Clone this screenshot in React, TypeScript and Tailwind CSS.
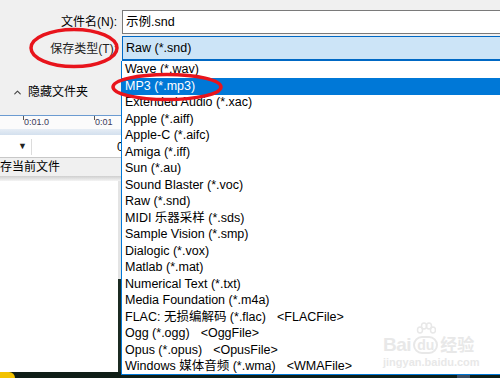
import { ChevronUp } from 'lucide-react';

const types = [
  { name: 'Wave (*.wav)' },
  { name: 'MP3 (*.mp3)', active: true },
  { name: 'Extended Audio (*.xac)' },
  { name: 'Apple (*.aiff)' },
  { name: 'Apple-C (*.aifc)' },
  { name: 'Amiga (*.iff)' },
  { name: 'Sun (*.au)' },
  { name: 'Sound Blaster (*.voc)' },
  { name: 'Raw (*.snd)' },
  { name: 'MIDI 乐器采样 (*.sds)' },
  { name: 'Sample Vision (*.smp)' },
  { name: 'Dialogic (*.vox)' },
  { name: 'Matlab (*.mat)' },
  { name: 'Numerical Text (*.txt)' },
  { name: 'Media Foundation (*.m4a)' },
  { name: 'FLAC: 无损编解码 (*.flac)', tag: '<FLACFile>' },
  { name: 'Ogg (*.ogg)', tag: '<OggFile>' },
  { name: 'Opus (*.opus)', tag: '<OpusFile>' },
  { name: 'Windows 媒体音频 (*.wma)', tag: '<WMAFile>' },
];

function Watermark() {
  return (
    <div className="absolute left-[383px] top-[322px] flex flex-col text-[#e8e8e8] pointer-events-none">
      <div className="flex items-end gap-[2px]">
        <span className="text-[19px] font-bold leading-none tracking-tight">Bai</span>
        <div className="flex flex-col items-center">
          <svg width="20" height="14" viewBox="0 0 20 14">
            <ellipse cx="4" cy="8" rx="2.5" ry="3" fill="none" stroke="#e8e8e8" strokeWidth="1.5" />
            <ellipse cx="8" cy="4" rx="2.5" ry="3" fill="none" stroke="#e8e8e8" strokeWidth="1.5" />
            <ellipse cx="13" cy="4" rx="2.5" ry="3" fill="none" stroke="#e8e8e8" strokeWidth="1.5" />
            <ellipse cx="17" cy="8" rx="2.5" ry="3" fill="none" stroke="#e8e8e8" strokeWidth="1.5" />
          </svg>
          <span className="text-[14px] font-bold leading-none border-2 border-[#e8e8e8] rounded-full px-[2px]">du</span>
        </div>
        <span className="text-[17px] font-bold leading-none">经验</span>
      </div>
      <span className="text-[11px] font-bold leading-none mt-[3px]">jingyan.baidu.com</span>
    </div>
  );
}

export default function App() {
  return (
    <div
      className="relative w-[500px] h-[378px] overflow-hidden bg-[#f0f0f0] text-black"
      style={{ fontFamily: '"Liberation Sans", "Noto Sans CJK SC", sans-serif' }}
    >
      <div className="flex flex-col h-full">
        {/* dialog header */}
        <div className="pt-[10px] text-[12px]">
          <div className="flex items-center h-[24px]">
            <span className="w-[122px] text-right pr-[5px]">文件名(N):</span>
            <div className="flex-1 h-full flex items-center bg-white border-y border-l border-[#7a7a7a] pl-[3px] text-[12.5px]">
              示例.snd
            </div>
          </div>
          <div className="flex items-center h-[25px] mt-[2px]">
            <span className="w-[122px] text-right pr-[5px] text-[#222]">保存类型(T):</span>
            <div className="flex-1 h-full flex items-center bg-[#cce4f7] border-t border-l border-b-2 border-[#0068c4] pl-[3px] text-[12.5px]">
              Raw (*.snd)
            </div>
          </div>
          <div className="h-[54px] pt-[23px] pl-[12px] flex items-start gap-[5px]">
            <ChevronUp className="w-[11px] h-[11px] mt-[3px] text-[#444]" strokeWidth={2.5} />
            <span className="text-[12px] leading-[16px]">隐藏文件夹</span>
          </div>
        </div>

        {/* editor behind the dialog */}
        <div className="h-[1px] bg-[#6b9bd1]" />
        <div className="h-[13px] bg-[#fbfbfb] flex text-[9px] leading-[13px] text-[#3a3a5a]">
          <div className="w-[23px]" />
          <div className="border-l border-[#555] h-[4px]" />
          <span>0:01.0</span>
          <div className="w-[45px]" />
          <div className="border-l border-[#555] h-[4px]" />
          <span>0:01</span>
        </div>
        <div className="h-[6px] bg-gradient-to-b from-[#e6edf5] to-[#d3e0ee]" />
        <div className="h-[2px] bg-white" />
        <div className="h-[21px] bg-white border-b border-[#c8c8c8] flex items-center text-[12px]">
          <span className="ml-[18px] text-[9px] text-[#222]">▼</span>
          <div className="ml-[4px] w-[1px] h-[16px] bg-[#dcdcdc]" />
          <span className="ml-[85px]">0</span>
        </div>
        <div className="h-[18px] bg-[#f0f0f0] flex items-center text-[12px]">存当前文件</div>
        <div className="h-[5px] bg-gradient-to-b from-[#cfcfcf] to-[#f4f4f4]" />
        <div className="flex-1 flex bg-white">
          <div className="w-[118px]" />
          <div className="w-[3px] flex flex-col">
            <div className="h-[98px] bg-[#e4e4e4]" />
            <div className="flex-1 bg-[#1c2b22]" />
          </div>
        </div>
        <div className="h-[6px] bg-[#0f1e17] flex items-stretch">
          <div className="w-[15px] bg-[#f2c200] rounded-tr-[6px]" />
          <div className="flex-1" />
          <div className="w-[13px] bg-[#3c4c5e] mr-[30px] mt-[3px]" />
        </div>
      </div>

      {/* open dropdown list */}
      <div className="absolute left-[121px] top-[61px] w-[379px] h-[314px] bg-white border-l border-b border-[#0078d7] pt-[0.5px] text-[12.5px]">
        {types.map((t) => (
          <div
            key={t.name}
            className={`h-[16.5px] flex items-center pl-[3px] whitespace-pre ${
              t.active ? 'bg-[#0078d7] text-white' : 'text-black'
            }`}
          >
            <span>{t.name}</span>
            {t.tag && <span className="ml-[11px]">{t.tag}</span>}
          </div>
        ))}
      </div>

      <Watermark />

      {/* red annotation ellipses */}
      <svg className="absolute inset-0 pointer-events-none" width="500" height="378" viewBox="0 0 500 378">
        <ellipse cx="74" cy="48" rx="43" ry="18.5" fill="none" stroke="#e8141c" strokeWidth="3.5" />
        <ellipse cx="167" cy="87" rx="54" ry="12.5" fill="none" stroke="#e8141c" strokeWidth="3.5" />
      </svg>
    </div>
  );
}
